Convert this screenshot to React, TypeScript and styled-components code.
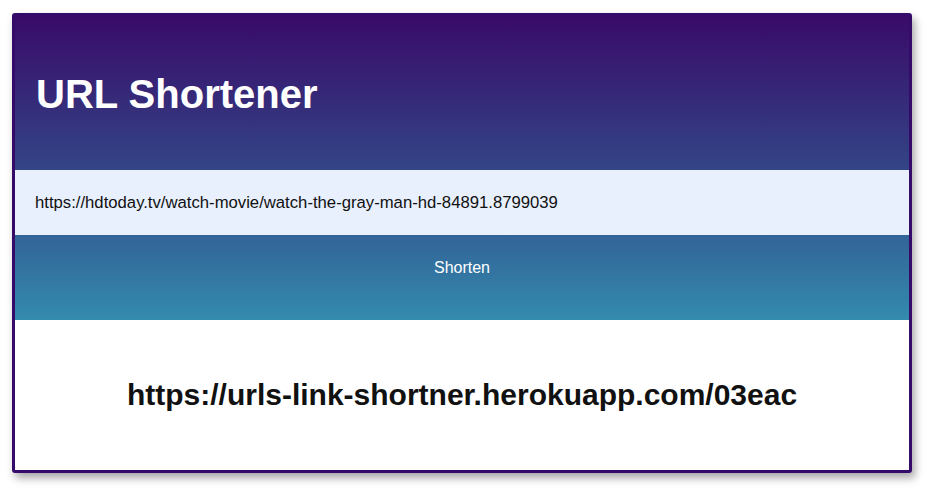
import React from "react";
import styled, { createGlobalStyle } from "styled-components";

const GlobalStyle = createGlobalStyle`
  html, body { margin: 0; padding: 0; background: #ffffff; }
  body { font-family: "Liberation Sans", Arial, sans-serif; }
`;

const Page = styled.div`
  padding: 13px 16px 15px 12px;
`;

const Card = styled.div`
  width: 900px;
  height: 460px;
  box-sizing: border-box;
  border: 3px solid #350b6a;
  border-radius: 3px;
  overflow: hidden;
  background: #ffffff;
  box-shadow: 3px 5px 8px rgba(0, 0, 0, 0.35);
  display: flex;
  flex-direction: column;
`;

const Top = styled.div`
  background: linear-gradient(180deg, #390b69 0%, #334486 50%, #338bae 100%);
  display: flex;
  flex-direction: column;
`;

const Header = styled.header`
  height: 154px;
  display: flex;
  align-items: center;
  padding-left: 21px;
`;

const Title = styled.h1`
  margin: 0;
  color: #ffffff;
  font-size: 40px;
  font-weight: 700;
  padding-top: 3px;
`;

const UrlInput = styled.input`
  height: 65px;
  box-sizing: border-box;
  border: none;
  outline: none;
  background: #e8f0fe;
  padding: 0 20px;
  font-family: "Liberation Sans", Arial, sans-serif;
  font-size: 16.7px;
  color: #111111;
`;

const ShortenButton = styled.button`
  height: 85px;
  border: none;
  background: transparent;
  color: #ffffff;
  font-family: "Liberation Sans", Arial, sans-serif;
  font-size: 16px;
  padding-bottom: 20px;
  cursor: pointer;
`;

const Result = styled.div`
  flex: 1;
  display: flex;
  align-items: center;
  justify-content: center;
`;

const ShortLink = styled.h2`
  margin: 0;
  font-size: 30px;
  font-weight: 700;
  color: #111111;
`;

export default function App() {
  return (
    <>
      <GlobalStyle />
      <Page>
        <Card>
          <Top>
            <Header>
              <Title>URL Shortener</Title>
            </Header>
            <UrlInput
              type="text"
              defaultValue="https://hdtoday.tv/watch-movie/watch-the-gray-man-hd-84891.8799039"
            />
            <ShortenButton>Shorten</ShortenButton>
          </Top>
          <Result>
            <ShortLink>https://urls-link-shortner.herokuapp.com/03eac</ShortLink>
          </Result>
        </Card>
      </Page>
    </>
  );
}
